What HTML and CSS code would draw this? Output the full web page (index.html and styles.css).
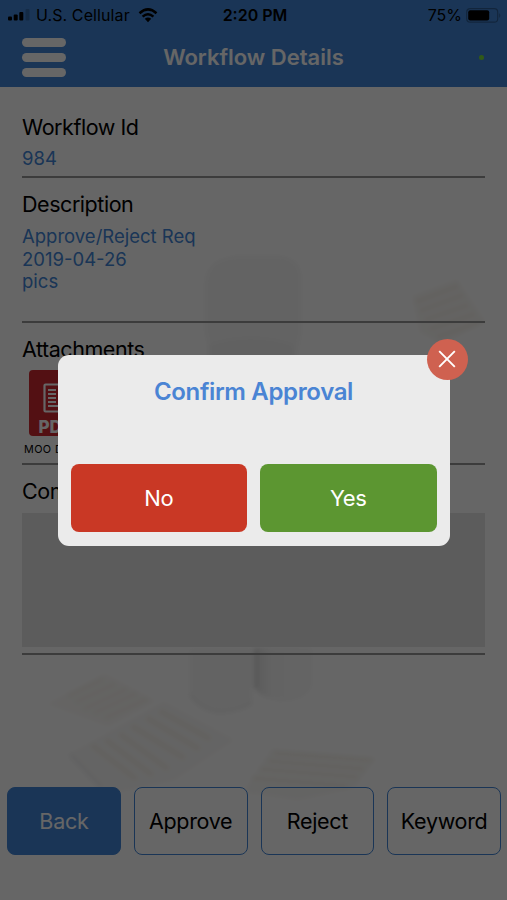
FILE: index.html
```html
<!DOCTYPE html>
<html lang="en">
<head>
    <meta charset="UTF-8">
    <meta name="viewport" content="width=device-width, initial-scale=1.0">
    <title>Workflow Details</title>
    <link rel="stylesheet" href="styles.css">
</head>
<body>

<div class="app">
    <!-- faint background artwork -->
    <svg class="artwork" viewBox="0 0 507 900" aria-hidden="true">
        <defs>
            <filter id="soft"><feGaussianBlur stdDeviation="2"/></filter>
            <linearGradient id="leg" x1="0" x2="1" y1="0" y2="0">
                <stop offset="0" stop-color="#e3e3e3"/>
                <stop offset=".3" stop-color="#f8f8f8"/>
                <stop offset="1" stop-color="#fafafa"/>
            </linearGradient>
        </defs>
        <g filter="url(#soft)">
            <path d="M205 290c0-24 10-34 40-34h30c18 0 26 8 26 24v52l-6 30h-82l-8-30z" fill="#f8f8f8"/>
            <path d="M209 345q42-14 84 0v20h-84z" fill="#f2f2f2"/>
            <path d="M190 650h62v48c0 10-22 15-36 14-16-1-26-12-26-20z" fill="#f8f8f8"/>
            <path d="M190 694q10 16 30 18 24-2 32-10" fill="none" stroke="#f1f1f1" stroke-width="3"/>
            <path d="M254 648h58v38q-8 16-34 15-18-4-24-14z" fill="url(#leg)"/>
            <path d="M256 650v38" stroke="#dadada" stroke-width="4"/>
            <path d="M413 296l44-16 28 42-43 22-22-12z" fill="#fbf9f6"/>
            <path d="M416 302l42-16M420 311l43-16M425 320l43-15M430 329l45-15M437 337l44-15" stroke="#f5f1ea" stroke-width="3"/>
            <path d="M48 704l57-30 50 27-47 25z" fill="#fcfaf8"/>
            <path d="M68 696l35-17M76 702l39-18M84 709l43-20M94 713l43-20M105 718l42-19" stroke="#f6f2eb" stroke-width="3"/>
            <path d="M70 754l94-52 70 38-60 40-66 14z" fill="#fbfaf9"/>
            <path d="M92 745l44 34M106 740l46 35M120 734l48 35M132 726l52 32M147 718l52 31M160 711l50 28" stroke="#f5f1e9" stroke-width="4"/>
            <path d="M70 754l32 34" stroke="#f4f4f5" stroke-width="5"/>
            <path d="M272 749l104 9-22 30-56 12-54-8z" fill="#fbfaf8"/>
            <path d="M274 753l98 7M268 761l96 8M260 769l98 8M252 778l96 8" stroke="#f5f2e9" stroke-width="3"/>
        </g>
    </svg>

    <header class="header">
        <div class="status-bar">
            <div class="carrier">
                <svg class="signal" width="25" height="12" viewBox="0 0 25 12">
                    <rect x="0" y="7.500" width="4" height="4" rx="1"/>
                    <rect x="5.700" y="5.500" width="4" height="6" rx="1"/>
                    <rect x="11.300" y="3" width="4" height="8.500" rx="1"/>
                    <rect x="17.500" y="0" width="4" height="11.500" rx="1" opacity=".2"/>
                </svg>
                <span class="carrier-name">U.S. Cellular</span>
                <svg class="wifi" width="20" height="15" viewBox="0 0 20 15">
                    <path d="M1.500 5.200Q10-2.500 18.500 5.200M4.600 8.600Q10 3.800 15.400 8.600" fill="none" stroke="#000" stroke-width="2.500"/>
                    <path d="M6.800 10.800Q10 8.200 13.200 10.800L10 14.200z"/>
                </svg>
            </div>
            <span class="clock">2:20 PM</span>
            <div class="battery">
                <span>75%</span>
                <svg width="36" height="15" viewBox="0 0 36 15">
                    <rect x=".7" y=".7" width="31" height="13.500" rx="3.500" fill="none" stroke="#000" stroke-opacity=".3" stroke-width="1.200"/>
                    <rect x="2.200" y="2.300" width="21" height="10.300" rx="2"/>
                    <path d="M33.300 5q2 2.500 0 5z" opacity=".35"/>
                </svg>
            </div>
        </div>
        <div class="nav">
            <div class="menu"><i></i><i></i><i></i></div>
            <h1>Workflow Details</h1>
            <span class="online"></span>
        </div>
    </header>

    <main class="content">
        <section class="field workflow">
            <h2>Workflow Id</h2>
            <p>984</p>
        </section>
        <section class="field description">
            <h2>Description</h2>
            <p>Approve/Reject Req<br>2019-04-26<br>pics</p>
        </section>
        <section class="field attachments">
            <h2>Attachments</h2>
            <svg class="pdf" width="66" height="66" viewBox="0 0 66 66">
                <rect width="66" height="66" rx="4" fill="#d02a30"/>
                <rect x="15.500" y="14.500" width="34" height="27" rx="1" fill="none" stroke="#fff" stroke-width="2.200"/>
                <path d="M19 20h8M19 24h8M19 28h8M19 32h8M19 36h27M30 20h16M30 25h16M30 30h16" stroke="#fff" stroke-width="1.800"/>
                <text x="9.500" y="62.500" class="pdf-text">PDF</text>
            </svg>
            <span class="file-name">MOO DOC</span>
        </section>
        <section class="field comments">
            <h2>Comments</h2>
            <div class="comment-box"></div>
        </section>
    </main>

    <footer class="actions">
        <button class="button primary">Back</button>
        <button class="button">Approve</button>
        <button class="button">Reject</button>
        <button class="button">Keyword</button>
    </footer>
</div>

<div class="overlay">
    <div class="dialog">
        <h3>Confirm Approval</h3>
        <div class="choices">
            <button class="choice no">No</button>
            <button class="choice yes">Yes</button>
        </div>
        <button class="close" aria-label="Close">
            <svg width="18" height="18" viewBox="0 0 18 18">
                <path d="M1.200 1.200l15.600 15.600M16.800 1.200L1.200 16.800" stroke="#fff" stroke-width="1.900"/>
            </svg>
        </button>
    </div>
</div>

</body>
</html>
```

FILE: styles.css
```css
* {
    box-sizing: border-box;
}
body {
    margin: 0;
    font-family: Inter, "Liberation Sans", sans-serif;
    background-color: #fff;
}
h1, h2, h3, p {
    margin: 0;
    font-weight: 400;
}
button {
    font-family: inherit;
    padding: 0;
    cursor: pointer;
}
.app {
    position: relative;
    display: flex;
    flex-direction: column;
    height: 900px;
    overflow: hidden;
}
.artwork {
    position: absolute;
    top: 0;
    left: 0;
    width: 507px;
    height: 900px;
    z-index: -1;
}
.header {
    height: 87px;
    background-color: #4286d8;
}
.status-bar {
    display: grid;
    grid-template-columns: 1fr auto 1fr;
    align-items: center;
    height: 30px;
    padding: 0 5px 0 8px;
    font-size: 16px;
}
.carrier {
    display: flex;
    align-items: center;
}
.carrier-name {
    margin-left: 3px;
    letter-spacing: 0.1px;
}
.wifi {
    margin-left: 8px;
}
.clock {
    font-weight: 600;
}
.battery {
    display: flex;
    align-items: center;
    justify-content: flex-end;
    gap: 4px;
}
.nav {
    display: grid;
    grid-template-columns: 44px 1fr 44px;
    align-items: center;
    height: 54px;
    padding: 0 22px;
}
.menu {
    display: flex;
    flex-direction: column;
    gap: 6px;
}
.menu i {
    height: 9px;
    border-radius: 5px;
    background-color: #fff;
}
.nav h1 {
    font-size: 22px;
    font-weight: 600;
    color: #fff;
    text-align: center;
}
.online {
    width: 5px;
    height: 5px;
    margin-right: 1px;
    border-radius: 50%;
    background-color: #7be03a;
    justify-self: end;
}
.content {
    flex: 1;
    padding: 0 22px;
}
.field {
    border-bottom: 2px solid #979797;
    padding-top: 12px;
}
.field h2 {
    font-size: 21.5px;
    line-height: 28px;
    letter-spacing: -0.45px;
    color: #000;
}
.field p {
    margin-top: 7px;
    font-size: 18.5px;
    line-height: 22.7px;
    color: #4286d8;
}
.workflow {
    height: 91px;
    padding-top: 26px;
}
.workflow p {
    margin-top: 6px;
}
.description {
    height: 145px;
}
.attachments {
    height: 142px;
}
.pdf {
    display: block;
    margin: 7px 0 0 7px;
}
.pdf-text {
    font: 800 17px Inter, sans-serif;
    fill: #fff;
}
.file-name {
    display: block;
    margin: 7px 0 0 2px;
    font-size: 10.8px;
    line-height: 14px;
    letter-spacing: 0.4px;
}
.comments {
    height: 190px;
}
.comment-box {
    height: 134px;
    margin-top: 8px;
    background-color: #e6e6e6;
}
.actions {
    display: grid;
    grid-template-columns: repeat(4, 1fr);
    gap: 13px;
    padding: 0 6px 45px 7px;
}
.button {
    height: 68px;
    border: 1.5px solid #4286d8;
    border-radius: 8px;
    background-color: transparent;
    font-size: 21.5px;
    letter-spacing: -0.3px;
    color: #000;
}
.button.primary {
    background-color: #4286d8;
    color: #fff;
}
.overlay {
    position: absolute;
    top: 0;
    left: 0;
    width: 100%;
    height: 900px;
    display: flex;
    align-items: center;
    justify-content: center;
    background-color: rgba(0, 0, 0, 0.6);
}
.dialog {
    position: relative;
    display: flex;
    flex-direction: column;
    justify-content: space-between;
    width: 392px;
    height: 191px;
    padding: 21px 13px 14px;
    border-radius: 11px;
    background-color: #ebebeb;
}
.dialog h3 {
    font-size: 24px;
    font-weight: 600;
    line-height: 32px;
    letter-spacing: -0.35px;
    color: #4a84d4;
    text-align: center;
}
.choices {
    display: grid;
    grid-template-columns: 1fr 1fr;
    gap: 13px;
}
.choice {
    height: 68px;
    border: none;
    border-radius: 8px;
    font-size: 22px;
    letter-spacing: -0.4px;
    color: #fff;
}
.choice.no {
    background-color: #c93825;
}
.choice.yes {
    background-color: #5c9631;
}
.close {
    position: absolute;
    top: -16px;
    right: -18px;
    display: flex;
    align-items: center;
    justify-content: center;
    width: 41px;
    height: 41px;
    border: none;
    border-radius: 50%;
    background-color: #cf6150;
}
```
